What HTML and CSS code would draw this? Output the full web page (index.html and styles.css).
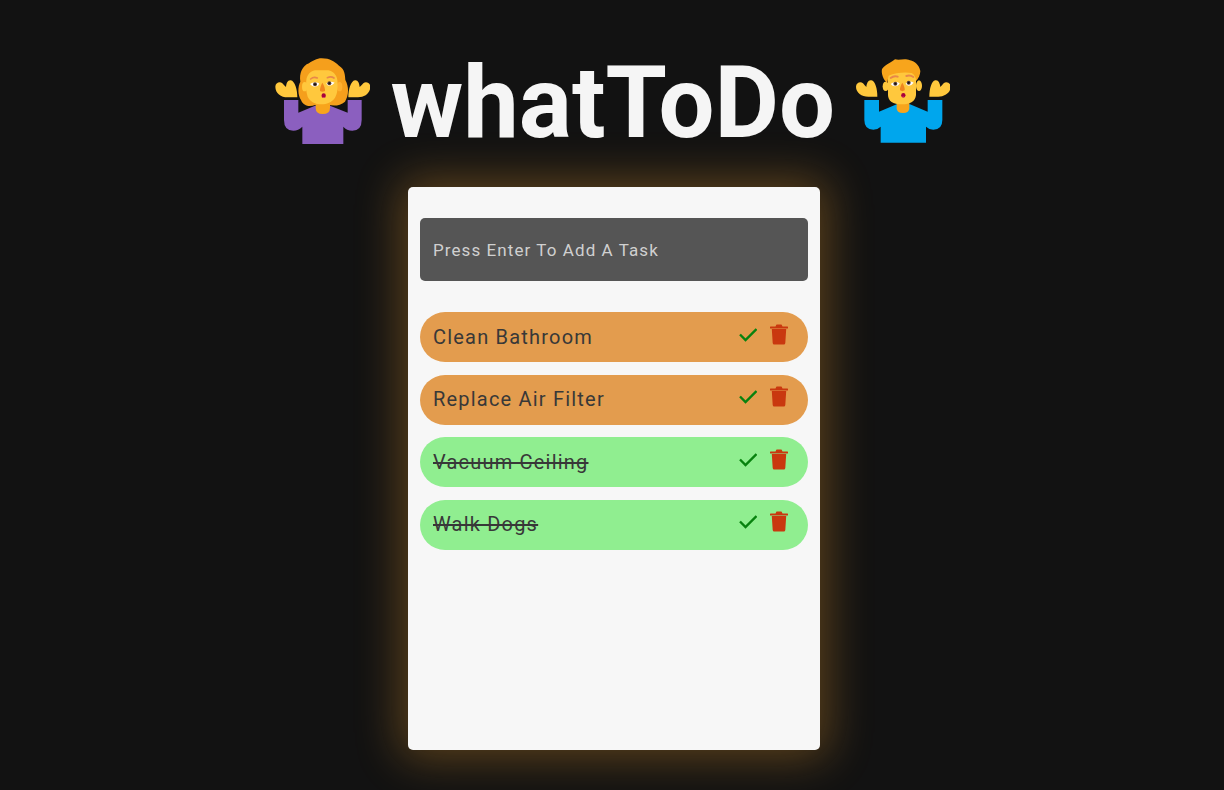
FILE: index.html
```html
<!DOCTYPE html>
<html lang="en">
<head>
<meta charset="utf-8">
<title>whatToDo</title>
<link rel="stylesheet" href="styles.css">
</head>
<body>
<header class="header">
  <svg class="emoji" viewBox="27 21 288 288" aria-hidden="true">
    <path fill="#8b5fbf" d="M57 165H100V203L150 182H195L248 203V165H290V225Q290 257 262 257Q245 257 235 245V297H112V245Q100 257 85 257Q57 257 57 225Z"/>
    <path fill="#ffc83d" d="M97 157H68C48 157 31 145 31 125C31 114 44 108 52 115C56 119 59 123 63 126C64 115 68 105 77 106C90 108 97 135 97 157Z"/>
    <path fill="#ffc83d" d="M250 157H279C299 157 316 145 316 125C316 114 303 108 295 115C291 119 288 123 284 126C283 115 279 105 270 106C257 108 250 135 250 157Z"/>
    <path fill="#f59f1c" d="M170 40C196 40 208 50 222 62C240 72 240 92 241 105C252 125 252 150 240 170C225 184 205 182 190 180H150C135 186 115 184 108 165C98 150 98 125 106 110C102 85 112 62 132 55C142 48 155 40 170 40Z"/>
    <ellipse cx="119" cy="125" rx="8" ry="14" fill="#ffc83d"/>
    <ellipse cx="224" cy="125" rx="8" ry="14" fill="#ffb02e"/>
    <path fill="#f8a51c" d="M152 170H195V188Q195 207 173 207Q152 207 152 188Z"/>
    <path fill="#ffc83d" d="M124 105C125 92 135 78 150 76H190C205 78 216 92 217 105C219 128 218 145 210 158C200 172 185 178 170 178C150 178 135 170 128 155C123 140 122 122 124 105Z"/>
    <path fill="none" stroke="#e8884a" stroke-width="5" stroke-linecap="round" d="M137 102Q146 94 157 99M187 98Q198 93 207 99"/>
    <path fill="#fff" d="M135 117Q148 108 162 115Q162 125 148 125Q140 124 135 117ZM184 115Q196 106 209 113Q202 122 192 122Q185 122 184 115Z"/>
    <circle cx="150" cy="118" r="6" fill="#5c4038"/><circle cx="193" cy="115" r="6" fill="#5c4038"/>
    <circle cx="150" cy="118" r="3" fill="#111"/><circle cx="193" cy="115" r="3" fill="#111"/>
    <path fill="#f0861e" d="M172 113C177 120 181 132 180 138Q172 143 165 138C164 131 168 120 172 113Z"/>
    <ellipse cx="176" cy="152" rx="6.500" ry="7" fill="#a8003c"/>
    <path fill="#f45a7a" d="M173 156h6v2h-6z"/>
  </svg>
  <h1 class="title">whatToDo</h1>
  <svg class="emoji" viewBox="27 21 288 288" aria-hidden="true">
    <path fill="#00a6ed" d="M58 165H102V200L155 178H195L248 200V165H292V225Q292 254 265 254Q252 254 243 245V293H107V245Q98 254 85 254Q58 254 58 225Z"/>
    <path fill="#ffc83d" d="M97 155H70C50 155 33 143 33 125C33 114 46 108 54 115C58 119 60 123 64 126C65 115 70 104 79 106C91 108 97 133 97 155Z"/>
    <path fill="#ffc83d" d="M253 155H280C300 155 317 143 317 125C317 114 304 108 296 115C292 119 290 123 286 126C285 115 280 104 271 106C259 108 253 133 253 155Z"/>
    <path fill="#f8a51c" d="M155 170H193V190Q193 204 174 204Q155 204 155 190Z"/>
    <ellipse cx="122" cy="124" rx="9" ry="14" fill="#ffc83d"/>
    <ellipse cx="222" cy="122" rx="9" ry="16" fill="#ffc83d"/>
    <path fill="#ffc83d" d="M129 70H213V150Q210 178 170 178Q130 178 129 150Z"/>
    <path fill="#f8a51c" d="M111 72C125 56 140 52 150 43C165 47 178 39 195 46C210 49 222 60 226 78C226 90 220 100 214 108C212 96 208 88 200 84C178 80 150 84 131 92C129 100 128 108 127 114C115 105 108 85 111 72Z"/>
    <path fill="none" stroke="#e8884a" stroke-width="6" stroke-linecap="round" d="M137 99Q147 91 158 95M184 93Q195 89 205 96"/>
    <path fill="#fff" d="M137 117Q150 106 164 115Q160 124 150 124Q142 124 137 117ZM182 115Q194 105 206 113Q200 122 191 122Q184 122 182 115Z"/>
    <circle cx="151" cy="116" r="6" fill="#5c4038"/><circle cx="191" cy="113" r="6" fill="#5c4038"/>
    <circle cx="151" cy="116" r="3" fill="#111"/><circle cx="191" cy="113" r="3" fill="#111"/>
    <path fill="#f0861e" d="M172 113C177 120 180 130 179 136Q172 141 165 136C164 129 168 120 172 113Z"/>
    <ellipse cx="175" cy="151" rx="6.500" ry="7" fill="#a8003c"/>
    <path fill="#f45a7a" d="M172 155h6v2h-6z"/>
  </svg>
</header>
<main class="card">
  <input class="task-input" type="text" placeholder="Press Enter To Add A Task">
  <ul class="tasks">
    <li class="task">
      <span class="task-name">Clean Bathroom</span>
      <span class="actions">
        <svg class="icon-check" viewBox="0 1 18 27"><path d="M1 11.500L6.500 17 17.500 6"/></svg>
        <svg class="icon-trash" viewBox="0 1 18 27"><path d="M6 2.500Q6 1.500 7 1.500H11Q12 1.500 12 2.500L12.500 3.500H17.500Q18 3.500 18 4.200V5Q18 5.500 17.500 5.500H.5Q0 5.500 0 5V4.200Q0 3.500 .5 3.500H5.500ZM1.800 6H16.200L15.300 20Q15.200 21.500 13.800 21.500H4.200Q2.800 21.500 2.700 20Z"/></svg>
      </span>
    </li>
    <li class="task">
      <span class="task-name">Replace Air Filter</span>
      <span class="actions">
        <svg class="icon-check" viewBox="0 1 18 27"><path d="M1 11.500L6.500 17 17.500 6"/></svg>
        <svg class="icon-trash" viewBox="0 1 18 27"><path d="M6 2.500Q6 1.500 7 1.500H11Q12 1.500 12 2.500L12.500 3.500H17.500Q18 3.500 18 4.200V5Q18 5.500 17.500 5.500H.5Q0 5.500 0 5V4.200Q0 3.500 .5 3.500H5.500ZM1.800 6H16.200L15.300 20Q15.200 21.500 13.800 21.500H4.200Q2.800 21.500 2.700 20Z"/></svg>
      </span>
    </li>
    <li class="task done">
      <span class="task-name">Vacuum Ceiling</span>
      <span class="actions">
        <svg class="icon-check" viewBox="0 1 18 27"><path d="M1 11.500L6.500 17 17.500 6"/></svg>
        <svg class="icon-trash" viewBox="0 1 18 27"><path d="M6 2.500Q6 1.500 7 1.500H11Q12 1.500 12 2.500L12.500 3.500H17.500Q18 3.500 18 4.200V5Q18 5.500 17.500 5.500H.5Q0 5.500 0 5V4.200Q0 3.500 .5 3.500H5.500ZM1.800 6H16.200L15.300 20Q15.200 21.500 13.800 21.500H4.200Q2.800 21.500 2.700 20Z"/></svg>
      </span>
    </li>
    <li class="task done">
      <span class="task-name">Walk Dogs</span>
      <span class="actions">
        <svg class="icon-check" viewBox="0 1 18 27"><path d="M1 11.500L6.500 17 17.500 6"/></svg>
        <svg class="icon-trash" viewBox="0 1 18 27"><path d="M6 2.500Q6 1.500 7 1.500H11Q12 1.500 12 2.500L12.500 3.500H17.500Q18 3.500 18 4.200V5Q18 5.500 17.500 5.500H.5Q0 5.500 0 5V4.200Q0 3.500 .5 3.500H5.500ZM1.800 6H16.200L15.300 20Q15.200 21.500 13.800 21.500H4.200Q2.800 21.500 2.700 20Z"/></svg>
      </span>
    </li>
  </ul>
</main>
</body>
</html>
```
FILE: styles.css
```css
* { box-sizing: border-box; }
html, body { margin: 0; height: 100%; }
body {
  background: #121212;
  font-family: Roboto, "Liberation Sans", sans-serif;
  display: flex;
  flex-direction: column;
  align-items: center;
  overflow: hidden;
}
.header {
  height: 187px;
  padding-top: 13px;
  display: flex;
  align-items: center;
  justify-content: center;
  gap: 22px;
  flex: none;
  width: 100%;
}
.emoji { width: 96px; height: 96px; flex: none; }
.title {
  margin: 4px -3.5px -1px -2px;
  font-size: 99.2px;
  font-weight: 700;
  line-height: 116px;
  color: #f5f5f5;
}
.card {
  width: 412px;
  height: 563px;
  flex: none;
  margin-left: 4px;
  background: #f7f7f7;
  border-radius: 5px;
  padding: 31px 12px 0;
  box-shadow: 0 0 45px 8px rgba(245, 165, 50, 0.33);
}
.task-input {
  display: block;
  width: 100%;
  height: 63px;
  border: 0;
  outline: 0;
  border-radius: 5px;
  background: #555;
  padding: 0 13px;
  font: 400 17px Roboto, sans-serif;
  letter-spacing: 1.08px;
  color: #d0d0d0;
}
.task-input::placeholder { color: #d0d0d0; opacity: 1; }
.tasks {
  list-style: none;
  margin: 31px 0 0;
  padding: 0;
  display: flex;
  flex-direction: column;
  gap: 12.5px;
}
.task {
  height: 50px;
  border-radius: 25px;
  background: #e39c4e;
  padding: 0.5px 20px 0 13px;
  display: flex;
  align-items: center;
  justify-content: space-between;
  color: #383838;
  font-size: 20px;
  letter-spacing: 1.2px;
}
.task-name { margin-bottom: 1px; }
.task.done { background: #90ee90; }
.task.done .task-name { text-decoration: line-through; }
.actions { display: flex; align-items: center; gap: 13px; }
.icon-check, .icon-trash { width: 18px; height: 27px; display: block; }
.icon-check path { fill: none; stroke: #08820f; stroke-width: 2.4; }
.icon-trash path { fill: #c9380f; }
```
